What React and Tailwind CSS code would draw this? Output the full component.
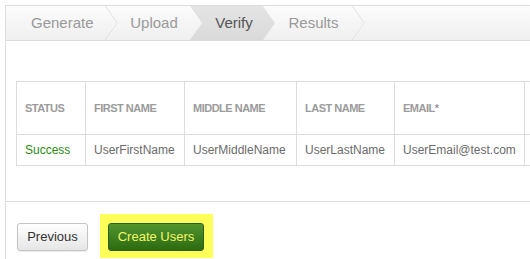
import React from 'react';

const font = { fontFamily: '"Liberation Sans", Arial, sans-serif' };

function Chevron() {
  return (
    <svg width="13" height="34" viewBox="0 0 13 34" className="shrink-0">
      <polyline points="0.5,0 12.5,17 0.5,34" fill="none" stroke="#d9d9d9" strokeWidth="1" />
      <polyline points="1.5,0 13,17 1.5,34" fill="none" stroke="#ffffff" strokeWidth="0.8" opacity="0.8" />
    </svg>
  );
}

const columns = ['Status', 'First Name', 'Middle Name', 'Last Name', 'Email*', ''];
const widths = ['w-[69px]', 'w-[99px]', 'w-[112px]', 'w-[98px]', 'w-[130px]', 'w-[60px]'];
const row = ['Success', 'UserFirstName', 'UserMiddleName', 'UserLastName', 'UserEmail@test.com', ''];

export default function App() {
  return (
    <div className="w-[530px] h-[259px] overflow-hidden bg-white pt-[5px] pl-[5px]" style={font}>
      <div className="h-full border-l border-[#dcdcdc] flex flex-col">
        {/* wizard steps */}
        <div className="h-[36px] border-t border-b border-[#dcdcdc] bg-gradient-to-b from-[#fcfcfc] to-[#efefef] flex text-[15px] text-[#9a9a9a]">
          <div className="w-[99px] pl-[25px] flex items-center shrink-0">Generate</div>
          <Chevron />
          <div className="w-[72px] flex items-center justify-center shrink-0">Upload</div>
          <div
            className="w-[85px] shrink-0 flex items-center justify-center pl-[3px] bg-gradient-to-b from-[#e4e4e4] to-[#dadada] text-[#555]"
            style={{ clipPath: 'polygon(0 0, 73px 0, 85px 50%, 73px 100%, 0 100%, 12px 50%)' }}
          >
            Verify
          </div>
          <div className="w-[77px] flex items-center justify-center shrink-0">Results</div>
          <Chevron />
        </div>

        {/* table */}
        <div className="pt-[40px] pl-[10px]">
          <table className="border-collapse text-left table-fixed w-[568px] min-w-[568px]">
            <thead>
              <tr className="h-[53px]">
                {columns.map((c, i) => (
                  <th
                    key={i}
                    className={`${widths[i]} border border-[#dcdcdc] px-[8px] text-[11px] font-bold uppercase text-[#9b9b9b] tracking-[-0.5px] align-middle`}
                  >
                    {c}
                  </th>
                ))}
              </tr>
            </thead>
            <tbody>
              <tr className="h-[31px]">
                {row.map((c, i) => (
                  <td
                    key={i}
                    className={`border border-[#dcdcdc] px-[8px] text-[12px] whitespace-nowrap ${
                      i === 0 ? 'text-[#2b8a14]' : 'text-[#6b6b6b]'
                    }`}
                  >
                    {c}
                  </td>
                ))}
              </tr>
            </tbody>
          </table>
        </div>

        {/* footer */}
        <div className="mt-[35px] border-t border-[#dcdcdc] pt-[12px] pl-[11px] flex items-start gap-[12px]">
          <button className="mt-[9px] w-[71px] h-[28px] rounded-[3px] border border-[#c4c4c4] bg-gradient-to-b from-[#ffffff] to-[#e6e6e6] text-[13px] text-[#333] shadow-[0_1px_1px_rgba(0,0,0,0.08)]">
            Previous
          </button>
          <div className="bg-[#ffff5a] pt-[9px] pl-[8px] pr-[9px] pb-[7px]">
            <button className="w-[96px] h-[28px] rounded-[3px] border border-[#2d5f12] bg-gradient-to-b from-[#52962f] to-[#2c6a10] text-[13px] text-[#f4f66a]">
              Create Users
            </button>
          </div>
        </div>
      </div>
    </div>
  );
}
